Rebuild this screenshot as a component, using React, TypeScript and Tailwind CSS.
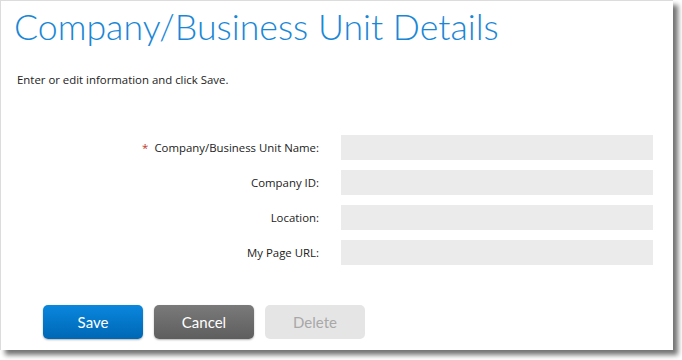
const fields = [
  { label: 'Company/Business Unit Name:', required: true },
  { label: 'Company ID:', required: false },
  { label: 'Location:', required: false },
  { label: 'My Page URL:', required: false },
];

export default function App() {
  return (
    <div className="w-[682px] h-[360px] bg-white overflow-hidden">
      <div className="w-[673px] h-[350px] bg-white border-t border-l border-[#dcdcdc] shadow-[5px_5px_5px_rgba(0,0,0,0.55)]">
        <h1 className="pl-[13px] pt-[4px] text-[35.7px] leading-[44px] font-light text-[#1a87d6] font-['Lato',sans-serif]">
          Company/Business Unit Details
        </h1>
        <p className="pl-[16px] mt-[23px] text-[11.4px] leading-[16px] text-[#222] font-['Open_Sans','Noto_Sans',sans-serif]">
          Enter or edit information and click Save.
        </p>
        <div className="mt-[47px] flex flex-col gap-[10px]">
          {fields.map((f) => (
            <div key={f.label} className="flex items-center h-[25px]">
              <label className="w-[318px] text-right text-[11.4px] text-[#222] font-['Open_Sans','Noto_Sans',sans-serif]">
                {f.required && <span className="text-[#c0392b] mr-[6px]">*</span>}
                {f.label}
              </label>
              <div className="ml-[22px] w-[312px] h-[25px] bg-[#ebebeb]" />
            </div>
          ))}
        </div>
        <div className="mt-[40px] pl-[42px] flex gap-[11px] font-['Lato',sans-serif] text-[15px]">
          <button className="w-[100px] h-[34px] rounded-[5px] bg-gradient-to-b from-[#0a87de] to-[#0067b4] text-white shadow-[0_1px_2px_rgba(0,0,0,0.3)]">
            Save
          </button>
          <button className="w-[100px] h-[34px] rounded-[5px] bg-gradient-to-b from-[#7a7a7a] to-[#5e5e5e] text-white shadow-[0_1px_2px_rgba(0,0,0,0.3)]">
            Cancel
          </button>
          <button className="w-[100px] h-[34px] rounded-[5px] bg-[#e5e5e5] text-[#a8a8a8]">
            Delete
          </button>
        </div>
      </div>
    </div>
  );
}
